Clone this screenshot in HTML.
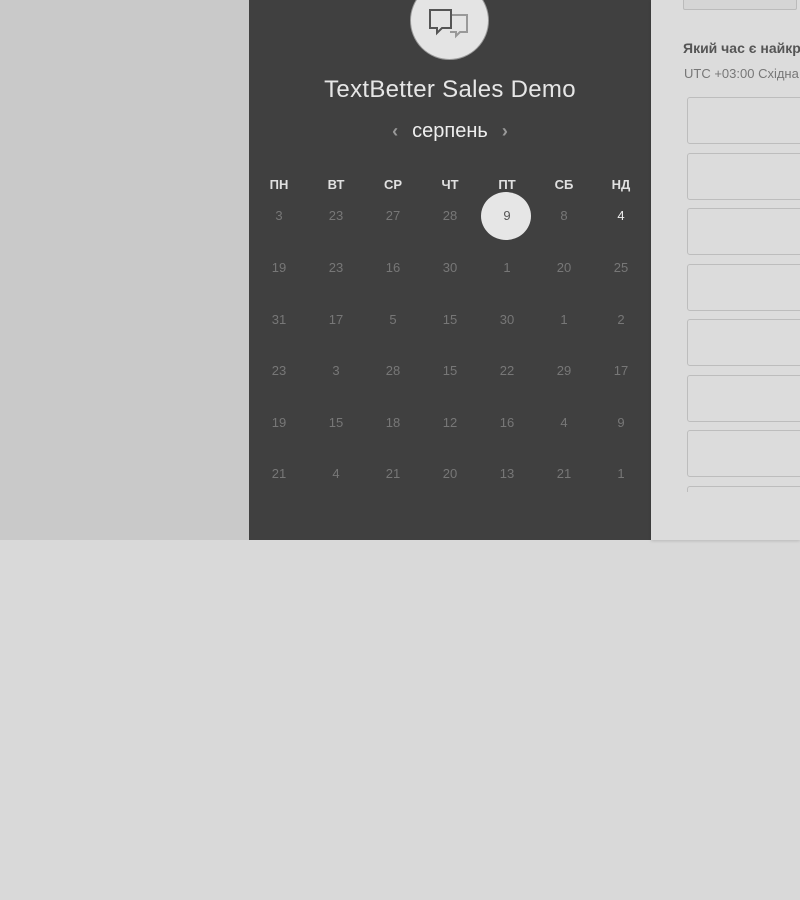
<!DOCTYPE html>
<html><head><meta charset="utf-8"><style>
body{margin:0;width:800px;height:900px;background:#d9d9d9;position:relative;overflow:hidden;font-family:"Liberation Sans",sans-serif}
.left{position:absolute;left:0;top:0;width:249px;height:540px;background:#c9c9c9}
.dark{position:absolute;left:249px;top:0;width:402px;height:540px;background:#404040}
.right{position:absolute;left:651px;top:0;width:149px;height:540px;background:#dcdcdc;box-shadow:0 1px 3px rgba(0,0,0,.15);overflow:hidden}
.logo{position:absolute;left:161px;top:-19px;width:77px;height:77px;border-radius:50%;background:#e4e4e4;border:1px solid #999}
.title{position:absolute;left:0;width:402px;top:76px;text-align:center;color:#e6e6e6;font-size:24px;letter-spacing:0.3px}
.month{position:absolute;left:0;width:402px;top:120px;text-align:center;color:#eee;font-size:20px}
.month span{color:#999;font-size:18px;margin:0 14px;font-weight:bold}
.d{position:absolute;width:50px;margin-left:-25px;text-align:center;font-size:13px;color:#777}
.h{color:#e0e0e0;font-weight:bold;font-size:13px}
.sel{position:absolute;left:232px;top:192px;width:50px;height:48px;border-radius:50%;background:#e6e6e6}
.slot{position:absolute;left:36px;width:130px;height:47px;border:1px solid #bdbdbd;border-radius:3px;box-sizing:border-box}
</style></head><body>
<div class="left"></div>
<div class="dark">
<div class="logo"><svg width="77" height="77" viewBox="0 0 77 77" style="position:absolute;left:0;top:0"><path d="M40 33h16v17h-7l-4 4v-4h-6" fill="none" stroke="#999" stroke-width="2"/><path d="M19 28h21v18H31l-5 5v-5h-7z" fill="#e4e4e4" stroke="#555" stroke-width="2"/></svg></div>
<div class="title">TextBetter Sales Demo</div>
<div class="month"><span>‹</span>серпень<span>›</span></div>
<div class="sel"></div>
<div id="g"></div>
</div>
<div class="right">
<div style="position:absolute;left:32px;top:-2px;width:112px;height:10px;border:1px solid #bbb;background:#d5d5d5;border-radius:2px"></div>
<div style="position:absolute;left:32px;top:40px;font-weight:bold;font-size:14px;color:#555;white-space:nowrap">Який час є найкращим</div>
<div style="position:absolute;left:33px;top:66px;font-size:13px;color:#777;white-space:nowrap">UTC +03:00 Східна Європа</div>
<div class="slot" style="top:97px"></div><div class="slot" style="top:153px"></div><div class="slot" style="top:208px"></div><div class="slot" style="top:264px"></div><div class="slot" style="top:319px"></div><div class="slot" style="top:375px"></div><div class="slot" style="top:430px"></div>
<div style="position:absolute;left:36px;top:486px;width:130px;height:5px;border:1px solid #bdbdbd;border-bottom:none;border-radius:3px 3px 0 0"></div>
</div>
<script>
var g=document.getElementById('g'),xs=[30,87,144,201,258,315,372],ys=[208,260,312,363,415,466];
var hd=['ПН','ВТ','СР','ЧТ','ПТ','СБ','НД'];
var data=[[3,23,27,28,9,8,4],[19,23,16,30,1,20,25],[31,17,5,15,30,1,2],[23,3,28,15,22,29,17],[19,15,18,12,16,4,9],[21,4,21,20,13,21,1]];
var h='';for(var i=0;i<7;i++)h+='<div class="d h" style="left:'+xs[i]+'px;top:177px">'+hd[i]+'</div>';
for(var r=0;r<6;r++)for(var c=0;c<7;c++){var s='';if(r==0&&c==4)s='color:#555;';if(r==0&&c==6)s='color:#eee;';h+='<div class="d" style="'+s+'left:'+xs[c]+'px;top:'+ys[r]+'px">'+data[r][c]+'</div>';}
g.innerHTML=h;
</script>
</body></html>
